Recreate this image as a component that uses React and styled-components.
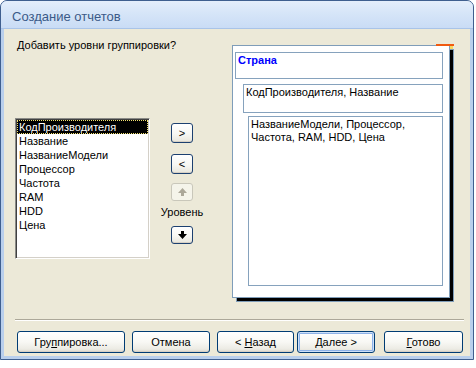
import styled, { createGlobalStyle } from "styled-components";

const GlobalStyle = createGlobalStyle`
  html, body {
    margin: 0;
    padding: 0;
    background: #fff;
  }
  body {
    font-family: "Liberation Sans", Arial, sans-serif;
    font-size: 11px;
    color: #000;
  }
`;

const Window = styled.div`
  width: 472px;
  border: 1px solid #3f5f8f;
  border-radius: 7px 7px 0 0;
  background: #b9cfec;
  overflow: hidden;
`;

const TitleBar = styled.div`
  height: 28px;
  box-sizing: border-box;
  padding: 3px 0 0 11px;
  display: flex;
  align-items: center;
  background: linear-gradient(180deg, #e4eefb 0%, #d6e5f8 45%, #c9dcf5 100%);
  border-bottom: 1px solid #a9c4e8;
  font-size: 13px;
  color: #3b5a88;
`;

const Frame = styled.div`
  padding: 0 3px 3px;
`;

const Body = styled.div`
  background: #ece9d8;
  padding: 9px 6px 3px 11px;
  display: flex;
  flex-direction: column;
`;

const Main = styled.div`
  display: grid;
  grid-template-columns: 217px 218px;
  align-items: start;
`;

const LeftColumn = styled.div`
  display: flex;
  flex-direction: column;
`;

const Heading = styled.div`
  line-height: 14px;
  padding-left: 2px;
`;

const ListRow = styled.div`
  display: flex;
  margin-top: 66px;
`;

const ListBox = styled.ul`
  list-style: none;
  margin: 0;
  padding: 1px 0 0;
  width: 135px;
  height: 141px;
  box-sizing: border-box;
  background: #fff;
  border: 1px solid;
  border-color: #8a8a86 #fff #fff #8a8a86;
  box-shadow: inset 1px 1px 0 #404040, inset -1px -1px 0 #d4d0c8;
`;

const ListItem = styled.li`
  height: 14px;
  line-height: 14px;
  margin: 0 1px;
  padding-left: 2px;
  white-space: nowrap;
  box-sizing: border-box;
  background: ${(p) => (p.$selected ? "#000" : "transparent")};
  color: ${(p) => (p.$selected ? "#fff" : "#000")};
  outline: ${(p) => (p.$selected ? "1px dotted #f0e070" : "none")};
  outline-offset: -1px;
`;

const Controls = styled.div`
  width: 48px;
  margin-left: 8px;
  padding-top: 5px;
  display: flex;
  flex-direction: column;
  align-items: center;
`;

const SmallButton = styled.button`
  width: 22px;
  height: ${(p) => p.$h}px;
  margin-top: ${(p) => p.$mt}px;
  padding: 0;
  display: flex;
  align-items: center;
  justify-content: center;
  font-family: "Liberation Sans", Arial, sans-serif;
  font-size: 11px;
  color: #000;
  border: 1px solid ${(p) => (p.disabled ? "#c9c7ba" : "#1c4070")};
  border-radius: 3px;
  background: ${(p) =>
    p.disabled
      ? "#f5f4ea"
      : "linear-gradient(180deg, #ffffff 0%, #f7f7f3 55%, #e8e6dc 100%)"};
  box-shadow: ${(p) => (p.disabled ? "none" : "inset 0 -1px 0 #d6d0c5")};
`;

const LevelLabel = styled.div`
  line-height: 14px;
  margin-top: 4px;
`;

const Preview = styled.div`
  position: relative;
  margin-top: 7px;
  width: 218px;
  height: 253px;
  box-sizing: border-box;
  background: #fff;
  border: 1px solid #7f9db9;
  box-shadow: 4px 4px 0 -1px #000, 4px 4px 0 0 #7f9db9;
  padding: 6px 6px 0 1px;
  display: flex;
  flex-direction: column;

  &::before {
    content: "";
    position: absolute;
    top: -2px;
    right: -5px;
    width: 18px;
    height: 2px;
    background: #f05a10;
  }

  &::after {
    content: "";
    position: absolute;
    top: 0;
    right: -4px;
    width: 3px;
    height: 3px;
    background: #f8d860;
  }
`;

const GroupBox = styled.div`
  margin-left: ${(p) => p.$indent}px;
  margin-top: ${(p) => p.$mt}px;
  height: ${(p) => p.$h}px;
  box-sizing: border-box;
  border: 1px solid #86a2bd;
  padding: 1px 2px;
  line-height: 13px;
  color: ${(p) => (p.$strong ? "#0000ff" : "#000")};
  font-weight: ${(p) => (p.$strong ? 700 : 400)};
`;

const Separator = styled.div`
  margin-top: 21px;
  height: 1px;
  background: #aca899;
  border-bottom: 1px solid #fff;
`;

const ButtonRow = styled.div`
  display: flex;
  margin-top: 10px;
  padding-left: 2px;
`;

const DialogButton = styled.button`
  width: ${(p) => p.$w}px;
  margin-left: ${(p) => p.$ml}px;
  height: 22px;
  padding: 0;
  font-family: "Liberation Sans", Arial, sans-serif;
  font-size: 11px;
  color: #000;
  border: 1px solid #003c74;
  border-radius: 3px;
  background: linear-gradient(180deg, #ffffff 0%, #f8f8f4 50%, #ecebe4 85%, #dcd8cc 100%);
  box-shadow: ${(p) =>
    p.$default
      ? "inset 0 0 0 1px #cee0f8, inset 0 0 0 2px #8db2e8"
      : "inset 0 -1px 0 #d6d0c5"};
`;

const Key = styled.span`
  text-decoration: underline;
`;

const UpArrow = ({ color }) => (
  <svg width="9" height="8" viewBox="0 0 9 8">
    <path d="M4.5 0 L9 5 L6 5 L6 8 L3 8 L3 5 L0 5 Z" fill={color} />
  </svg>
);

const DownArrow = ({ color }) => (
  <svg width="9" height="8" viewBox="0 0 9 8">
    <path d="M3 0 L6 0 L6 3 L9 3 L4.5 8 L0 3 L3 3 Z" fill={color} />
  </svg>
);

const fields = [
  "КодПроизводителя",
  "Название",
  "НазваниеМодели",
  "Процессор",
  "Частота",
  "RAM",
  "HDD",
  "Цена",
];

export default function App() {
  return (
    <>
      <GlobalStyle />
      <Window>
        <TitleBar>Создание отчетов</TitleBar>
        <Frame>
          <Body>
            <Main>
              <LeftColumn>
                <Heading>Добавить уровни группировки?</Heading>
                <ListRow>
                  <ListBox>
                    {fields.map((f, i) => (
                      <ListItem key={f} $selected={i === 0}>
                        {f}
                      </ListItem>
                    ))}
                  </ListBox>
                  <Controls>
                    <SmallButton $h={20} $mt={0}>&gt;</SmallButton>
                    <SmallButton $h={20} $mt={11}>&lt;</SmallButton>
                    <SmallButton $h={18} $mt={9} disabled>
                      <UpArrow color="#aca899" />
                    </SmallButton>
                    <LevelLabel>Уровень</LevelLabel>
                    <SmallButton $h={18} $mt={7}>
                      <DownArrow color="#000" />
                    </SmallButton>
                  </Controls>
                </ListRow>
              </LeftColumn>
              <Preview>
                <GroupBox $indent={1} $mt={0} $h={27} $strong>
                  Страна
                </GroupBox>
                <GroupBox $indent={9} $mt={5} $h={29}>
                  КодПроизводителя, Название
                </GroupBox>
                <GroupBox $indent={14} $mt={3} $h={170}>
                  НазваниеМодели, Процессор,
                  <br />
                  Частота, RAM, HDD, Цена
                </GroupBox>
              </Preview>
            </Main>
            <Separator />
            <ButtonRow>
              <DialogButton $w={108} $ml={0}>
                Гру<Key>п</Key>пировка...
              </DialogButton>
              <DialogButton $w={78} $ml={7}>
                Отмена
              </DialogButton>
              <DialogButton $w={77} $ml={7}>
                &lt; <Key>Н</Key>азад
              </DialogButton>
              <DialogButton $w={78} $ml={3} $default>
                <Key>Д</Key>алее &gt;
              </DialogButton>
              <DialogButton $w={79} $ml={9}>
                <Key>Г</Key>отово
              </DialogButton>
            </ButtonRow>
          </Body>
        </Frame>
      </Window>
    </>
  );
}
